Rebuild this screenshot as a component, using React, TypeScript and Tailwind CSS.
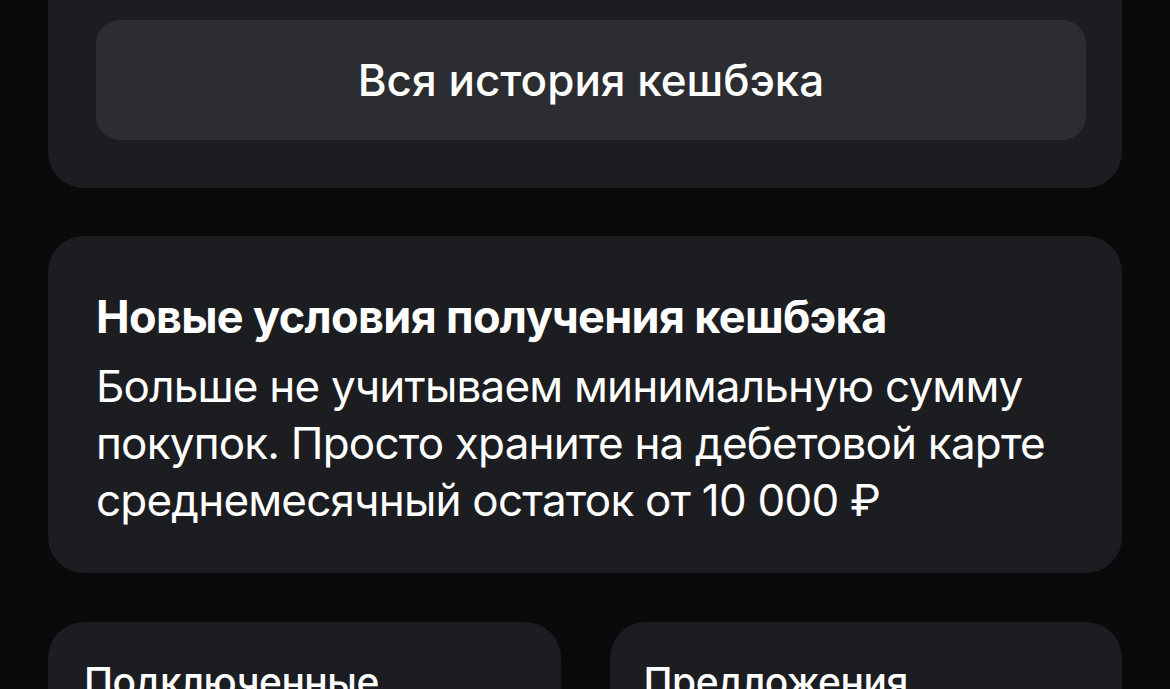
export default function App() {
  const font = { fontFamily: "Inter, 'Noto Sans', sans-serif" };
  return (
    <div
      className="h-screen w-full bg-[#0a0a0c] text-white overflow-hidden px-12"
      style={font}
    >
      <div className="flex flex-col">
        {/* Cashback history card */}
        <div className="mt-[-40px] rounded-[36px] bg-[#1c1d21] pl-12 pr-9 pt-[60px] pb-12">
          <button className="flex h-[120px] w-full items-center justify-center rounded-[24px] bg-[#2c2d31] text-[44px] font-medium leading-[52px] text-white">
            Вся история кешбэка
          </button>
        </div>

        {/* New conditions card */}
        <div className="mt-12 rounded-[36px] bg-[#1c1d21] px-12 pt-[55px] pb-[44px]">
          <h2 className="text-[45px] font-bold leading-[52px] tracking-[-0.65px]">
            Новые условия получения кешбэка
          </h2>
          <p className="mt-[15px] text-[44px] leading-[57px] tracking-[-0.8px] text-white">
            Больше не учитываем минимальную сумму покупок. Просто храните на дебетовой карте
            среднемесячный остаток от 10&nbsp;000&nbsp;₽
          </p>
        </div>

        {/* Bottom tiles */}
        <div className="mt-[49px] grid grid-cols-2 gap-[49px]">
          <div className="h-[240px] rounded-[36px] bg-[#1c1d21] px-[36px] pt-[36px]">
            <div className="text-[39px] font-medium leading-[48px] tracking-[-0.5px]">Подключенные</div>
          </div>
          <div className="h-[240px] rounded-[36px] bg-[#1c1d21] px-[34px] pt-[36px]">
            <div className="text-[39px] font-medium leading-[48px] tracking-[-0.5px]">Предложения</div>
          </div>
        </div>
      </div>
    </div>
  );
}
